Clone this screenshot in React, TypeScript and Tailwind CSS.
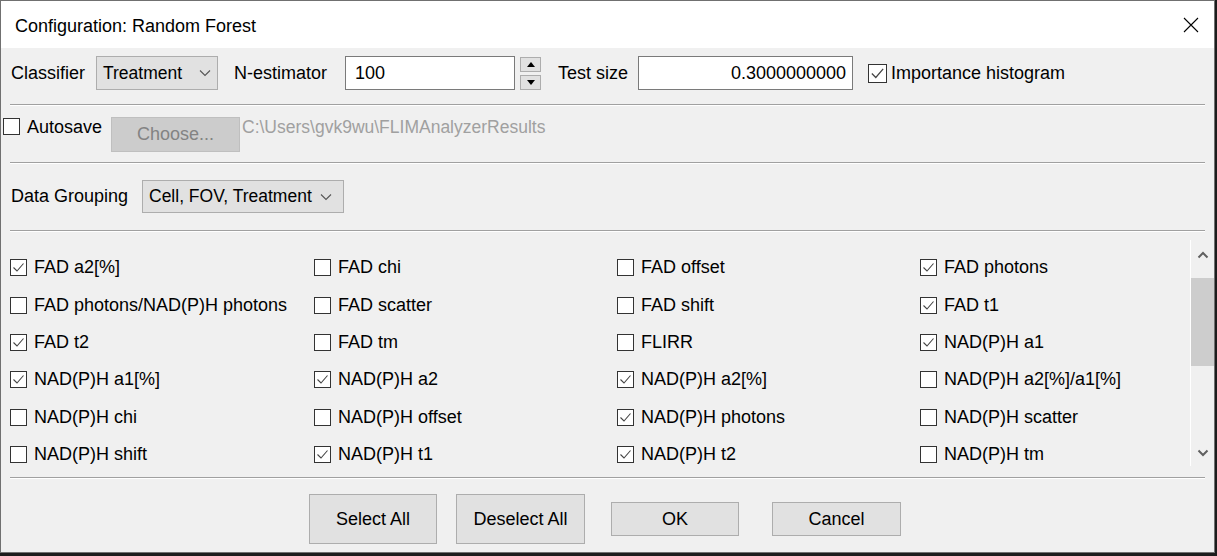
import React from "react";

const font = { fontFamily: '"Liberation Sans", Arial, sans-serif' };

const Check = ({ checked, size = 17 }: { checked: boolean; size?: number }) => {
  return (
    <div
      className="shrink-0 border border-[#333333] bg-white flex items-center justify-center"
      style={{ width: size, height: size }}
    >
      {checked ? (
        <svg width={size - 2} height={size - 2} viewBox="0 0 15 15">
          <polyline points="2.5,7.5 6,11 12.5,3.5" fill="none" stroke="#444444" strokeWidth="1.1" />
        </svg>
      ) : null}
    </div>
  );
};

const Chevron = () => (
  <svg width="12" height="8" viewBox="0 0 12 8">
    <polyline points="1,1.5 6,6.5 11,1.5" fill="none" stroke="#555555" strokeWidth="1.1" />
  </svg>
);

const Separator = () => (
  <div className="mx-[9px] w-[1195px] border-t border-[#a0a0a0] border-b border-b-white" />
);

const features: [string, boolean][] = [
  ["FAD a2[%]", true],
  ["FAD chi", false],
  ["FAD offset", false],
  ["FAD photons", true],
  ["FAD photons/NAD(P)H photons", false],
  ["FAD scatter", false],
  ["FAD shift", false],
  ["FAD t1", true],
  ["FAD t2", true],
  ["FAD tm", false],
  ["FLIRR", false],
  ["NAD(P)H a1", true],
  ["NAD(P)H a1[%]", true],
  ["NAD(P)H a2", true],
  ["NAD(P)H a2[%]", true],
  ["NAD(P)H a2[%]/a1[%]", false],
  ["NAD(P)H chi", false],
  ["NAD(P)H offset", false],
  ["NAD(P)H photons", true],
  ["NAD(P)H scatter", false],
  ["NAD(P)H shift", false],
  ["NAD(P)H t1", true],
  ["NAD(P)H t2", true],
  ["NAD(P)H tm", false],
];

export default function App() {
  return (
    <div className="w-[1217px] h-[556px] bg-[#1c1c1c] overflow-hidden text-[18px] text-black" style={font}>
      <div className="w-[1215px] h-[553px] border border-[#707070] flex flex-col">
        {/* title bar */}
        <div className="h-[47px] bg-white flex items-center justify-between pl-[14px] pr-[15px] pt-[3px]">
          <span className="text-[18px]">Configuration: Random Forest</span>
          <svg width="16" height="16" viewBox="0 0 16 16" className="-mt-[2px]">
            <path d="M1 1 L15 15 M15 1 L1 15" stroke="#000" strokeWidth="1.1" />
          </svg>
        </div>

        <div className="flex-1 bg-[#f0f0f0] flex flex-col">
          {/* row 1 */}
          <div className="mt-[8px] h-[34px] flex items-center pl-[10px]">
            <span className="w-[85px]">Classifier</span>
            <div className="w-[122px] h-[34px] bg-[#e1e1e1] border border-[#adadad] flex items-center justify-between pl-[6px] pr-[6px]">
              <span className="text-[17.5px]">Treatment</span>
              <Chevron />
            </div>
            <span className="ml-[16px] w-[111px]">N-estimator</span>
            <div className="w-[170px] h-[34px] bg-white border border-[#7a7a7a] flex items-center pl-[9px]">100</div>
            <div className="ml-[5px] w-[21px] flex flex-col gap-[3px]">
              <div className="h-[15px] bg-[#e1e1e1] border border-[#adadad] flex items-center justify-center">
                <svg width="8" height="5" viewBox="0 0 8 5"><polygon points="0,5 8,5 4,0" fill="#000" /></svg>
              </div>
              <div className="h-[15px] bg-[#e1e1e1] border border-[#adadad] flex items-center justify-center">
                <svg width="8" height="5" viewBox="0 0 8 5"><polygon points="0,0 8,0 4,5" fill="#000" /></svg>
              </div>
            </div>
            <span className="ml-[17px] w-[80px]">Test size</span>
            <div className="w-[215px] h-[34px] bg-white border border-[#7a7a7a] flex items-center justify-end pr-[6px]">0.3000000000</div>
            <div className="ml-[15px]">
              <Check checked size={19} />
            </div>
            <span className="ml-[4px]">Importance histogram</span>
          </div>

          <div className="mt-[14px]">
            <Separator />
          </div>

          {/* row 2 */}
          <div className="mt-[11px] flex items-start pl-[2px]">
            <div className="mt-[1px]">
              <Check checked={false} />
            </div>
            <span className="ml-[7px] leading-[20px] w-[84px]">Autosave</span>
            <div className="w-[129px] h-[35px] bg-[#cccccc] border border-[#bfbfbf] flex items-center justify-center text-[#838383]">
              Choose...
            </div>
            <span className="ml-[2px] leading-[20px] text-[17.5px] text-[#a0a0a0]">C:\Users\gvk9wu\FLIMAnalyzerResults</span>
          </div>

          <div className="mt-[10px]">
            <Separator />
          </div>

          {/* row 3 */}
          <div className="mt-[16px] h-[33px] flex items-center pl-[10px]">
            <span className="w-[131px]">Data Grouping</span>
            <div className="w-[202px] h-[33px] bg-[#e1e1e1] border border-[#adadad] flex items-center justify-between pl-[6px] pr-[11px]">
              <span className="text-[17.5px]">Cell, FOV, Treatment</span>
              <Chevron />
            </div>
          </div>

          <div className="mt-[17px]">
            <Separator />
          </div>

          {/* feature list */}
          <div className="mt-[8px] h-[230px] flex">
            <div className="flex-1 overflow-hidden pl-[9px] pt-[9px] grid grid-cols-[304px_303px_303px_1fr] auto-rows-[37.4px]">
              {features.map(([name, on]) => (
                <div key={name} className="flex items-center">
                  <Check checked={on} />
                  <span className="ml-[7px] whitespace-nowrap">{name}</span>
                </div>
              ))}
            </div>
            <div className="w-[24px] h-[226px] border-l border-white flex flex-col items-center">
              <div className="h-[38px] pt-[11px] flex items-start justify-center">
                <svg width="12" height="8" viewBox="0 0 12 8">
                  <polyline points="1.5,6.5 6,2 10.5,6.5" fill="none" stroke="#606060" strokeWidth="2" />
                </svg>
              </div>
              <div className="w-full h-[88px] bg-[#cdcdcd]" />
              <div className="flex-1" />
              <div className="h-[26px] flex items-center justify-center">
                <svg width="12" height="8" viewBox="0 0 12 8">
                  <polyline points="1.5,1.5 6,6 10.5,1.5" fill="none" stroke="#606060" strokeWidth="2" />
                </svg>
              </div>
            </div>
          </div>

          <div className="mt-[7px]">
            <Separator />
          </div>

          {/* buttons */}
          <div className="mt-[15px] h-[50px] flex items-center pl-[308px]">
            <button className="w-[128px] h-[50px] bg-[#e1e1e1] border border-[#adadad]">Select All</button>
            <button className="ml-[19px] w-[129px] h-[50px] bg-[#e1e1e1] border border-[#adadad]">Deselect All</button>
            <button className="ml-[26px] w-[128px] h-[34px] bg-[#e1e1e1] border border-[#adadad]">OK</button>
            <button className="ml-[33px] w-[129px] h-[34px] bg-[#e1e1e1] border border-[#adadad]">Cancel</button>
          </div>
        </div>
      </div>
    </div>
  );
}
